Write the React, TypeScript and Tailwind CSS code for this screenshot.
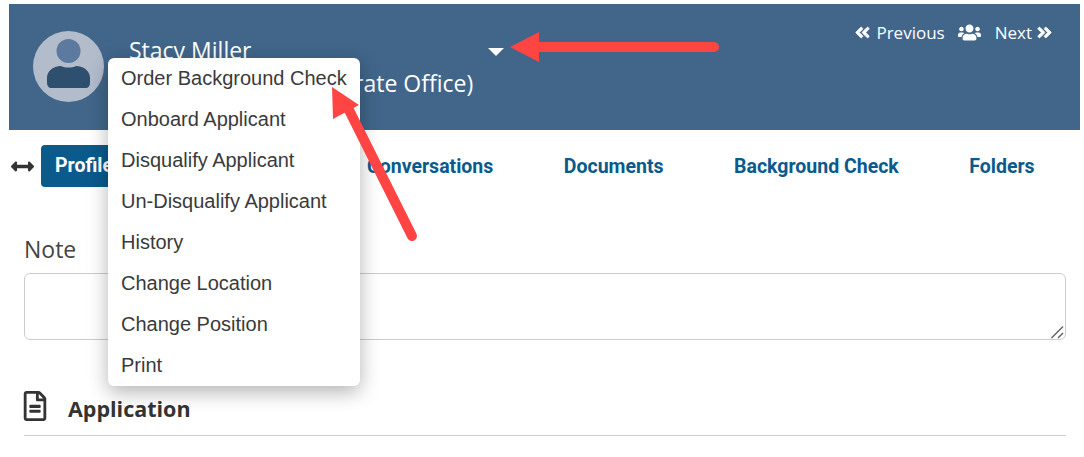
import { FaAngleDoubleLeft, FaAngleDoubleRight, FaUsers, FaRegFileAlt, FaArrowsAltH } from "react-icons/fa";

const MENU = [
  "Order Background Check",
  "Onboard Applicant",
  "Disqualify Applicant",
  "Un-Disqualify Applicant",
  "History",
  "Change Location",
  "Change Position",
  "Print",
];

const TABS = ["Conversations", "Documents", "Background Check", "Folders"];

function Avatar() {
  return (
    <svg width="71" height="71" viewBox="0 0 71 71" className="shrink-0">
      <circle cx="35.5" cy="35.5" r="35.5" fill="#b3bccb" />
      <circle cx="35.5" cy="20" r="12" fill="#5b7a9e" />
      <path d="M14 52 V47 C14 40 20 35 28 35 C32 37 39 37 43 35 C51 35 57 40 57 47 V52 C57 55 55 57 53 57 H18 C16 57 14 55 14 52 Z" fill="#2f4f6f" />
    </svg>
  );
}

export default function App() {
  return (
    <div className="relative h-[457px] w-[1084px] overflow-hidden bg-white font-['Open_Sans',sans-serif] text-[#333]">
      {/* Header */}
      <div className="mt-[4px] ml-[9px] flex h-[126px] w-[1071px] justify-between bg-[#41668a] text-white">
        <div className="flex items-start pl-[24px] pt-[27px]">
          <Avatar />
          <div className="pl-[25px] pt-[5px]">
            <div className="text-[23px] leading-[28px]">Stacy Miller</div>
            <div className="mt-[5px] ml-[6px] whitespace-nowrap text-[23px] leading-[28px]">Site Manager (Corporate Office)</div>
          </div>
        </div>
        <div className="flex items-center self-start pr-[27px] pt-[17px] text-[17px] leading-[22px]">
          <div className="flex items-center gap-[5px]">
            <FaAngleDoubleLeft size={17} stroke="currentColor" strokeWidth={24} />
            <span>Previous</span>
          </div>
          <FaUsers size={23} className="ml-[13px]" />
          <div className="ml-[14px] flex items-center gap-[4px]">
            <span>Next</span>
            <FaAngleDoubleRight size={17} stroke="currentColor" strokeWidth={24} />
          </div>
        </div>
      </div>

      {/* Tabs */}
      <div className="mt-[15px] flex h-[42px] items-center pl-[11px] font-['Roboto',sans-serif] text-[19.5px] font-bold text-[#0a5a8c]">
        <FaArrowsAltH size={23} className="text-[#333]" />
        <div className="ml-[7px] flex h-[42px] w-[100px] items-center rounded-[4px] bg-[#0a5a8c] pl-[14px] text-white">Profile</div>
        <div className="ml-[226px] flex gap-[70.5px] pt-[1px]">
          {TABS.map((t) => (
            <span key={t} className="whitespace-nowrap">{t}</span>
          ))}
        </div>
      </div>

      {/* Note */}
      <div className="pl-[24px] pr-[18px]">
        <div className="mt-[47px] text-[23px] leading-[30px] text-[#444]">Note</div>
        <div className="relative mt-[9px]">
          <textarea className="block h-[67px] w-[1042px] resize-none rounded-[6px] border border-[#ccc] bg-white outline-none" />
          <svg className="absolute bottom-0 right-0" width="16" height="16" viewBox="0 0 16 16">
            <path d="M1.5 14 L13 2.5 M8 14 L13 9" stroke="#666" strokeWidth="1.5" fill="none" />
          </svg>
        </div>
        <div className="mt-[52px] flex h-[33px] items-center">
          <FaRegFileAlt size={30} className="ml-[-4px] mb-[5px] text-[#333]" />
          <span className="ml-[18px] text-[21.5px] font-bold leading-[29px]">Application</span>
        </div>
        <div className="mt-[10px] h-px bg-[#ccc]" />
      </div>

      {/* Dropdown */}
      <div className="absolute left-[108px] top-[58px] flex w-[252px] flex-col rounded-[6px] bg-white pl-[13px] font-['Liberation_Sans',sans-serif] text-[20px] text-[#3a3a3a] shadow-[0_6px_20px_rgba(0,0,0,0.3)]">
        {MENU.map((m) => (
          <div key={m} className="flex h-[41px] shrink-0 items-center whitespace-nowrap pb-[2px]">{m}</div>
        ))}
      </div>

      {/* Caret */}
      <div className="absolute left-[488px] top-[48px] h-0 w-0 border-x-[8px] border-t-[8px] border-x-transparent border-t-white" />

      {/* Annotation arrows */}
      <svg className="pointer-events-none absolute left-0 top-0" width="1084" height="457">
        <path d="M534 47 H714" stroke="#ff4444" strokeWidth="10" strokeLinecap="round" />
        <path d="M510 47 L539 32 V62 Z" fill="#ff4444" />
        <path d="M412 236 L347 106" stroke="#ff4444" strokeWidth="10" strokeLinecap="round" />
        <path d="M332 87 L359 105 L333 119 Z" fill="#ff4444" />
      </svg>
    </div>
  );
}
